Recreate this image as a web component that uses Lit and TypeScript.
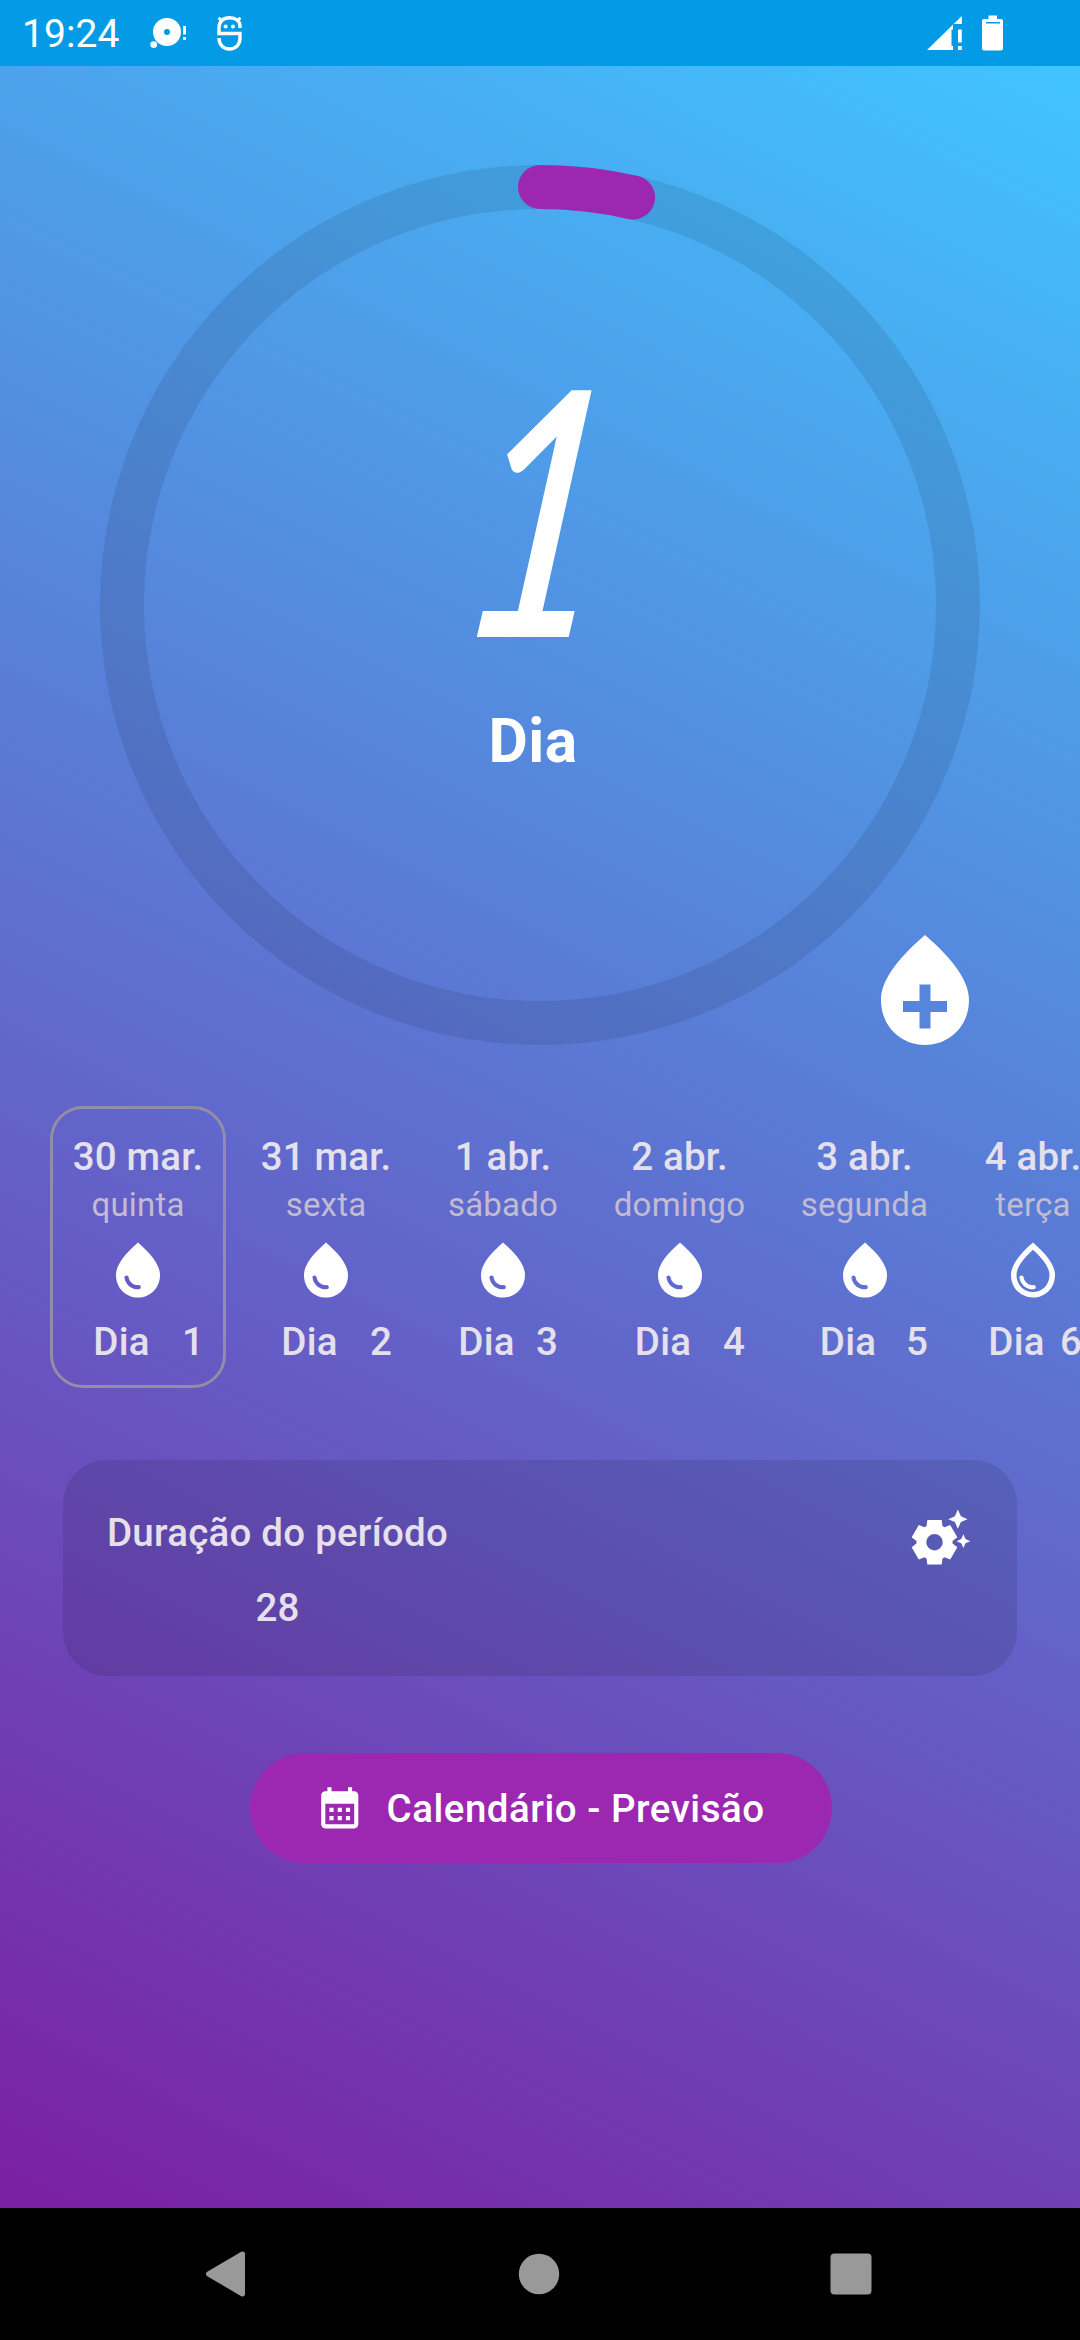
import { LitElement, html, css, svg } from "lit";
import { customElement, property } from "lit/decorators.js";

const DROP = "M12 2C6.67 6.55 4 10.48 4 13.8 4 18.78 7.8 22 12 22s8-3.22 8-8.2C20 10.48 17.33 6.55 12 2z";
const SHINE =
  "M7.83 14c.37 0 .67.26.74.62.41 2.22 2.28 2.98 3.64 2.87.43-.02.79.32.79.75 0 .4-.32.73-.72.75-2.13.13-4.62-1.09-5.19-4.12-.08-.45.28-.87.74-.87z";
const DROP_INNER = "M12 20c-3.35 0-6-2.57-6-6.2 0-2.34 1.95-5.44 6-9.14 4.05 3.7 6 6.79 6 9.14 0 3.63-2.65 6.2-6 6.2z";
const PLUS = "M11 11h2v3h3v2h-3v3h-2v-3H8v-2h3z";

interface Day {
  date: string;
  weekday: string;
  day: number;
  period: boolean;
  width: number;
}

const DAYS: Day[] = [
  { date: "30 mar.", weekday: "quinta", day: 1, period: true, width: 176 },
  { date: "31 mar.", weekday: "sexta", day: 2, period: true, width: 176 },
  { date: "1 abr.", weekday: "sábado", day: 3, period: true, width: 154 },
  { date: "2 abr.", weekday: "domingo", day: 4, period: true, width: 175 },
  { date: "3 abr.", weekday: "segunda", day: 5, period: true, width: 171 },
  { date: "4 abr.", weekday: "terça", day: 6, period: false, width: 142 },
];

const CYCLE = 28;
const CURRENT_DAY = 1;

/** Six-toothed gear outline centred on (cx, cy). */
function gearPath(cx: number, cy: number): string {
  const tooth = [[-2.9, -5.9], [-2.6, -8.1], [2.6, -8.1], [2.9, -5.9]];
  const pts: string[] = [];
  for (let k = 0; k < 6; k++) {
    const a = (k * Math.PI) / 3;
    for (const [x, y] of tooth) {
      const px = cx + x * Math.cos(a) - y * Math.sin(a);
      const py = cy + x * Math.sin(a) + y * Math.cos(a);
      pts.push(`${px.toFixed(2)} ${py.toFixed(2)}`);
    }
  }
  return `M${pts.join("L")}zM${cx - 3} ${cy}a3 3 0 1 0 6 0a3 3 0 1 0 -6 0z`;
}

@customElement("status-bar")
class StatusBar extends LitElement {
  static styles = css`
    :host {
      display: flex;
      align-items: center;
      height: 66px;
      flex: none;
      box-sizing: border-box;
      padding: 0 66px 0 22px;
      background: #039be5;
      color: #fff;
    }
    .time { font-size: 39px; letter-spacing: 0.1px; line-height: 66px; width: 124px; white-space: nowrap; padding-top: 1px; box-sizing: border-box; height: 66px; }
    .left { width: 110px; height: 66px; }
    .right { width: 100px; height: 66px; margin-left: auto; }
  `;
  render() {
    return html`
      <span class="time">19:24</span>
      <svg class="left" viewBox="146 0 110 66" fill="#fff">
        <path fill-rule="evenodd" d="M153 32a14 14 0 1 0 28 0a14 14 0 1 0 -28 0zM164 32a3 3 0 1 0 6 0a3 3 0 1 0 -6 0z" />
        <circle cx="153.7" cy="44.6" r="3.4" />
        <path d="M183 26h3v8.5h-3zM183 37h3v3h-3z" />
        <g fill="none" stroke="#fff" stroke-width="3.4">
          <path d="M240 28V26C240 21 236 17.8 229.5 17.8S219 22 219 27.5V33.5H240V38C240 45 235.5 49 229.5 49S219 45 219 38" />
          <path d="M218.6 17.8l4 4M240.4 17.8l-4 4" stroke-width="3" />
        </g>
        <circle cx="225.6" cy="26.4" r="2" /><circle cx="233" cy="26.4" r="2" />
      </svg>
      <svg class="right" viewBox="914 0 100 66" fill="#fff">
        <path d="M927 50L961.8 16V24H953V29.5H951.5V46H953V50z" />
        <path d="M958 29.5h3.8v13h-3.8zM958 46h3.8v4h-3.8z" />
        <path fill-rule="evenodd" d="M988.5 15.5h8.5v3.5h4q2 0 2 2V48.5q0 2-2 2H984q-2 0-2-2V21q0-2 2-2h4.5zM986 22v1.6h14V22z" />
      </svg>
    `;
  }
}

@customElement("cycle-ring")
class CycleRing extends LitElement {
  @property({ type: Number }) day = 1;
  @property({ type: Number }) total = 28;
  static styles = css`
    :host { display: grid; width: 880px; height: 880px; flex: none; }
    .ring, .label { grid-area: 1 / 1; }
    .ring { width: 880px; height: 880px; }
    .label {
      display: flex;
      flex-direction: column;
      align-items: center;
      padding: 159px 14px 0 0;
      color: #fff;
    }
    .number {
      font: italic 400 338px/360px Lato, "DejaVu Sans", sans-serif;
      -webkit-text-stroke: 4px #fff;
      transform: translateX(10px) skewX(-7.5deg) scaleX(0.74);
    }
    .caption { font-size: 60.5px; font-weight: 700; line-height: 72px; margin-top: 22px; letter-spacing: 0.5px; }
  `;
  render() {
    const a = (this.day / this.total) * 2 * Math.PI;
    const x = 440 + 418 * Math.sin(a);
    const y = 440 - 418 * Math.cos(a);
    return html`
      <svg class="ring" viewBox="0 0 880 880" fill="none" stroke-width="44">
        <circle cx="440" cy="440" r="418" stroke="#000" stroke-opacity="0.09" />
        ${svg`<path d=${`M440 22A418 418 0 0 1 ${x} ${y}`} stroke="#9c27b0" stroke-linecap="round" />`}
      </svg>
      <div class="label">
        <span class="number">${this.day}</span>
        <span class="caption">Dia</span>
      </div>
    `;
  }
}

@customElement("day-cell")
class DayCell extends LitElement {
  @property({ attribute: false }) data!: Day;
  @property({ type: Boolean, reflect: true }) selected = false;
  static styles = css`
    :host {
      display: flex;
      flex-direction: column;
      align-items: stretch;
      box-sizing: border-box;
      height: 282px;
      border: 3px solid transparent;
      border-radius: 33px;
      padding: 25px 19px 0;
      flex: none;
      text-align: center;
      white-space: nowrap;
      letter-spacing: 0.2px;
    }
    :host([selected]) { border-color: #938da6; }
    .date { font-size: 38.5px; font-weight: 500; line-height: 46px; color: #e4e0ec; margin: 0 -10px; }
    .weekday { font-size: 33px; line-height: 40px; color: #c2bbd2; margin: 5px -10px 0; }
    .drop { width: 66px; height: 66px; align-self: center; margin-top: 11.5px; fill: #fff; }
    .row { display: flex; font-size: 38.5px; font-weight: 500; line-height: 46px; color: #e4e0ec; margin-top: 16.5px; }
    .word { flex: 1; }
    .num { margin-left: 11px; }
  `;
  render() {
    const d = this.data;
    return html`
      <span class="date">${d.date}</span>
      <span class="weekday">${d.weekday}</span>
      <svg class="drop" viewBox="0 0 24 24">
        <path fill-rule="evenodd" d=${d.period ? DROP + SHINE : DROP + DROP_INNER + SHINE} />
      </svg>
      <div class="row"><span class="word">Dia</span><span class="num">${d.day}</span></div>
    `;
  }
}

@customElement("app-root")
class AppRoot extends LitElement {
  static styles = css`
    :host {
      display: flex;
      flex-direction: column;
      width: 1080px;
      height: 2340px;
      overflow: hidden;
      font-family: Roboto, "Liberation Sans", sans-serif;
    }
    .screen {
      flex: 1;
      display: flex;
      flex-direction: column;
      background: linear-gradient(26.77deg, #7b1fa2, #40c4ff);
      min-height: 0;
    }
    .hero { position: relative; display: flex; justify-content: center; padding-top: 99px; }
    .add { position: absolute; left: 859px; top: 858px; width: 132px; height: 132px; fill: #fff; }
    .days { display: flex; gap: 12px; margin-top: 61px; padding-left: 50px; overflow: hidden; }
    .card {
      display: flex;
      justify-content: space-between;
      align-items: flex-start;
      box-sizing: border-box;
      width: 954px;
      height: 216px;
      margin: 72px 0 0 63px;
      padding: 44px;
      border-radius: 44px;
      background: rgba(0, 0, 0, 0.1);
    }
    .info {
      display: flex;
      flex-direction: column;
      align-items: center;
      gap: 29px;
      padding-top: 6px;
      font-size: 38.5px;
      font-weight: 500;
      letter-spacing: 0.23px;
      line-height: 46px;
      color: #e6e0ec;
    }
    .gear { width: 66px; height: 66px; fill: #fff; }
    .button {
      display: flex;
      align-items: center;
      align-self: center;
      box-sizing: border-box;
      width: 582px;
      height: 110px;
      margin: 77px 0 0 2px;
      padding-left: 65px;
      gap: 22px;
      border: 0;
      border-radius: 55px;
      background: #9c27b0;
      color: #fff;
      font: 500 38.5px/46px Roboto, sans-serif;
      letter-spacing: 0.52px;
      white-space: nowrap;
    }
    .button span { padding-top: 2px; }
    .cal { width: 49.5px; height: 49.5px; fill: #fff; flex: none; }
    .nav { display: flex; align-items: center; justify-content: space-between; height: 132px; flex: none; background: #000; padding: 0 207px 0 204px; box-sizing: border-box; }
    .key { width: 44px; height: 48px; fill: #999; }
  `;
  render() {
    return html`
      <status-bar></status-bar>
      <main class="screen">
        <section class="hero">
          <cycle-ring .day=${CURRENT_DAY} .total=${CYCLE}></cycle-ring>
          <svg class="add" viewBox="0 0 24 24"><path fill-rule="evenodd" d=${DROP + PLUS} /></svg>
        </section>
        <section class="days">
          ${DAYS.map(
            (d) => html`<day-cell .data=${d} ?selected=${d.day === CURRENT_DAY} style=${`width:${d.width}px`}></day-cell>`
          )}
        </section>
        <section class="card">
          <div class="info"><span>Duração do período</span><span>${CYCLE}</span></div>
          <svg class="gear" viewBox="0 0 24 24">
            <path fill-rule="evenodd" d=${gearPath(10, 13.9)} />
            <path d="M17.41 6.59L15 5.5l2.41-1.09L18.5 2l1.09 2.41L22 5.5l-2.41 1.09L18.5 9zM21.28 12.72L20.5 11l-.78 1.72L18 13.5l1.72.78L20.5 16l.78-1.72L23 13.5z" />
          </svg>
        </section>
        <button class="button">
          <svg class="cal" viewBox="0 0 24 24">
            <path fill-rule="evenodd" d="M19 4h-1V2h-2v2H8V2H6v2H5c-1.1 0-2 .9-2 2v14c0 1.1.9 2 2 2h14c1.1 0 2-.9 2-2V6c0-1.1-.9-2-2-2zm0 16H5V10h14v10z" />
            <path d="M7 12h2v2H7zM11 12h2v2h-2zM15 12h2v2h-2zM7 16h2v2H7zM11 16h2v2h-2zM15 16h2v2h-2z" />
          </svg>
          <span>Calendário - Previsão</span>
        </button>
      </main>
      <nav class="nav">
        <svg class="key" viewBox="0 0 44 48"><path d="M38.5 4L4.5 24L38.5 44z" stroke="#999" stroke-width="5" stroke-linejoin="round" /></svg>
        <svg class="key" viewBox="0 0 44 48"><circle cx="22" cy="24" r="20.2" /></svg>
        <svg class="key" viewBox="0 0 44 48"><rect x="1.5" y="3.5" width="41" height="41" rx="4" /></svg>
      </nav>
    `;
  }
}
